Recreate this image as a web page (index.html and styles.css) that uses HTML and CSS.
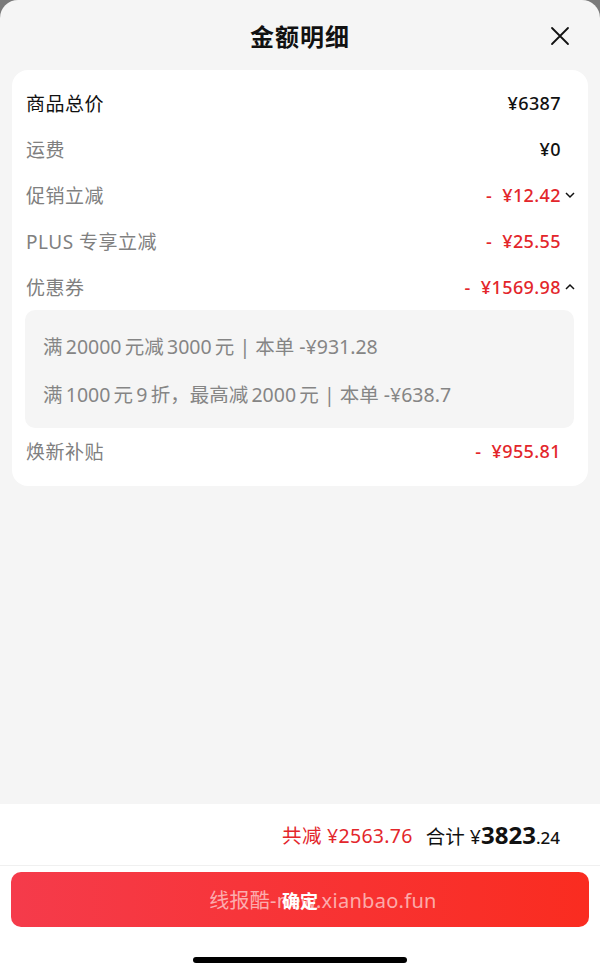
FILE: index.html
```html
<!DOCTYPE html>
<html lang="zh-CN">
  <head>
    <meta charset="UTF-8" />
    <title>金额明细</title>
    <link rel="stylesheet" href="styles.css">
  </head>
  <body>
    <div class="sheet">
      <!-- Header -->
      <div class="header">
        <h1>金额明细</h1>
        <svg class="close" viewBox="0 0 20 20" width="20" height="20">
          <path d="M2 2 L18 18 M18 2 L2 18" stroke="#111" stroke-width="1.8" fill="none" stroke-linecap="round" />
        </svg>
      </div>

      <!-- Detail Card -->
      <div class="card">
        <div class="row">
          <span class="label main">商品总价</span>
          <span class="value">¥6387</span>
        </div>
        <div class="row">
          <span class="label">运费</span>
          <span class="value">¥0</span>
        </div>
        <div class="row">
          <span class="label">促销立减</span>
          <span class="value red">-&nbsp; ¥12.42<svg class="chev" viewBox="0 0 12 12" width="12" height="12"><path d="M2 4 L6 8 L10 4" stroke="#111" stroke-width="1.5" fill="none" /></svg></span>
        </div>
        <div class="row">
          <span class="label">PLUS 专享立减</span>
          <span class="value red">-&nbsp; ¥25.55</span>
        </div>
        <div class="row">
          <span class="label">优惠券</span>
          <span class="value red">-&nbsp; ¥1569.98<svg class="chev" viewBox="0 0 12 12" width="12" height="12"><path d="M2 8 L6 4 L10 8" stroke="#111" stroke-width="1.5" fill="none" /></svg></span>
        </div>
        <div class="coupons">
          <div class="coupon">满&thinsp;20000&thinsp;元减&thinsp;3000&thinsp;元 | 本单 -¥931.28</div>
          <div class="coupon">满&thinsp;1000&thinsp;元&thinsp;9&thinsp;折，最高减&thinsp;2000&thinsp;元 | 本单 -¥638.7</div>
        </div>
        <div class="row">
          <span class="label">焕新补贴</span>
          <span class="value red">-&nbsp; ¥955.81</span>
        </div>
      </div>

      <div class="spacer"></div>

      <!-- Totals -->
      <div class="totals">
        <span class="saved">共减 ¥2563.76</span>
        <span class="sum">合计 ¥<b>3823</b><small>.24</small></span>
      </div>

      <div class="bottom">
        <div class="btn">
          确定
          <span class="watermark">线报酷-new.xianbao.fun</span>
        </div>
        <div class="home-bar"></div>
      </div>
    </div>
  </body>
</html>
```

FILE: styles.css
```css
body {
  margin: 0;
  background: #7a7a7a;
  font-family: "Noto Sans", "Noto Sans CJK SC", sans-serif;
  color: #111;
}

.sheet {
  width: 600px;
  height: 975px;
  background: #f5f5f5;
  border-radius: 18px 18px 0 0;
  display: flex;
  flex-direction: column;
  overflow: hidden;
}

.header {
  height: 70px;
  display: flex;
  align-items: center;
  justify-content: center;
  position: relative;
}

h1 {
  margin: 0;
  font-size: 24px;
  font-weight: 700;
  letter-spacing: 1px;
  font-family: "Noto Sans CJK SC", sans-serif;
}

.close {
  position: absolute;
  right: 30px;
  top: 26px;
}

.card {
  margin: 0 12px;
  background: #fff;
  border-radius: 16px;
  padding: 10px 14px 12px;
}

.row {
  height: 46px;
  display: flex;
  align-items: center;
  justify-content: space-between;
  padding-right: 13px;
}

.label {
  font-family: "Noto Sans", "Noto Sans CJK SC", sans-serif;
  font-size: 19px;
  letter-spacing: 0.5px;
  color: #808080;
}

.label.main {
  color: #111;
}

.value {
  font-size: 18px;
  font-weight: 500;
  letter-spacing: 0.4px;
  color: #111;
  position: relative;
}

.value.red {
  color: #e3262b;
}

.chev {
  position: absolute;
  right: -15px;
  top: 6px;
}

.coupons {
  background: #f5f5f5;
  border-radius: 10px;
  margin: 0 0 0 -1px;
  padding: 11px 18px 11px;
}

.coupon {
  height: 48px;
  display: flex;
  align-items: center;
  font-size: 19.5px;
  letter-spacing: 0;
  color: #858585;
  font-family: "Noto Sans", "Noto Sans CJK SC", sans-serif;
}

.spacer {
  flex: 1;
}

.totals {
  height: 61px;
  background: #fff;
  display: flex;
  align-items: center;
  justify-content: flex-end;
  gap: 13px;
  padding-right: 40px;
  border-bottom: 1px solid #f0f0f0;
  font-family: "Noto Sans", "Noto Sans CJK SC", sans-serif;
}

.saved {
  font-size: 19.5px;
  letter-spacing: 0.3px;
  color: #e3262b;
}

.sum {
  font-size: 19.5px;
  color: #111;
}

.sum b {
  font-size: 24px;
  font-weight: 700;
}

.sum small {
  font-size: 17px;
  font-weight: 500;
}

.bottom {
  height: 109px;
  background: #fff;
  display: flex;
  flex-direction: column;
  align-items: center;
}

.btn {
  margin-top: 6px;
  width: 578px;
  height: 55px;
  border-radius: 10px;
  background: linear-gradient(90deg, #f53b4b, #fa2c20);
  color: #fff;
  font-size: 18px;
  font-weight: 700;
  font-family: "Noto Sans CJK SC", sans-serif;
  display: flex;
  align-items: center;
  justify-content: center;
  position: relative;
}

.watermark {
  position: absolute;
  left: 46px;
  right: 0;
  text-align: center;
  font-size: 20px;
  font-weight: 400;
  color: rgba(255, 255, 255, 0.6);
  font-family: "Noto Sans", "Noto Sans CJK SC", sans-serif;
  letter-spacing: 0.3px;
}

.home-bar {
  margin-top: 30px;
  width: 214px;
  height: 6px;
  border-radius: 3px;
  background: #000;
}
```
